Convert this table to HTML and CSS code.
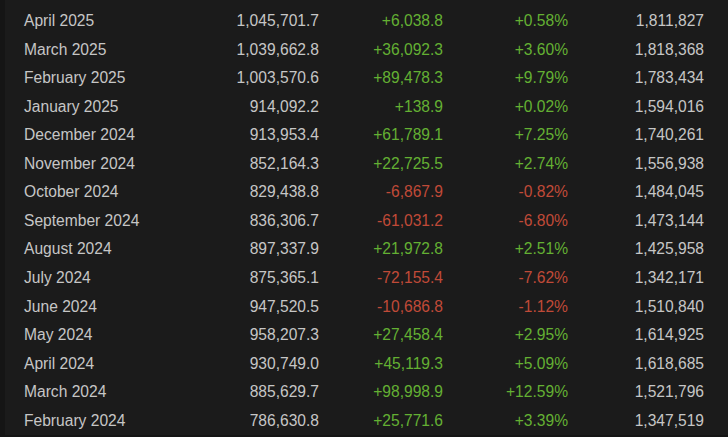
FILE: index.html
```html
<!DOCTYPE html>
<html lang="en">
<head>
<meta charset="utf-8">
<title>Monthly players</title>
<link rel="stylesheet" href="styles.css">
</head>
<body>
<div class="table">
  <div class="row"><span class="month">May 2025</span><span class="num">1,001,482.6</span><span class="num up">-44,219.1</span><span class="num up">-4.23%</span><span class="num">1,623,059</span></div>
  <div class="row"><span class="month">April 2025</span><span class="num">1,045,701.7</span><span class="num up">+6,038.8</span><span class="num up">+0.58%</span><span class="num">1,811,827</span></div>
  <div class="row"><span class="month">March 2025</span><span class="num">1,039,662.8</span><span class="num up">+36,092.3</span><span class="num up">+3.60%</span><span class="num">1,818,368</span></div>
  <div class="row"><span class="month">February 2025</span><span class="num">1,003,570.6</span><span class="num up">+89,478.3</span><span class="num up">+9.79%</span><span class="num">1,783,434</span></div>
  <div class="row"><span class="month">January 2025</span><span class="num">914,092.2</span><span class="num up">+138.9</span><span class="num up">+0.02%</span><span class="num">1,594,016</span></div>
  <div class="row"><span class="month">December 2024</span><span class="num">913,953.4</span><span class="num up">+61,789.1</span><span class="num up">+7.25%</span><span class="num">1,740,261</span></div>
  <div class="row"><span class="month">November 2024</span><span class="num">852,164.3</span><span class="num up">+22,725.5</span><span class="num up">+2.74%</span><span class="num">1,556,938</span></div>
  <div class="row"><span class="month">October 2024</span><span class="num">829,438.8</span><span class="num down">-6,867.9</span><span class="num down">-0.82%</span><span class="num">1,484,045</span></div>
  <div class="row"><span class="month">September 2024</span><span class="num">836,306.7</span><span class="num down">-61,031.2</span><span class="num down">-6.80%</span><span class="num">1,473,144</span></div>
  <div class="row"><span class="month">August 2024</span><span class="num">897,337.9</span><span class="num up">+21,972.8</span><span class="num up">+2.51%</span><span class="num">1,425,958</span></div>
  <div class="row"><span class="month">July 2024</span><span class="num">875,365.1</span><span class="num down">-72,155.4</span><span class="num down">-7.62%</span><span class="num">1,342,171</span></div>
  <div class="row"><span class="month">June 2024</span><span class="num">947,520.5</span><span class="num down">-10,686.8</span><span class="num down">-1.12%</span><span class="num">1,510,840</span></div>
  <div class="row"><span class="month">May 2024</span><span class="num">958,207.3</span><span class="num up">+27,458.4</span><span class="num up">+2.95%</span><span class="num">1,614,925</span></div>
  <div class="row"><span class="month">April 2024</span><span class="num">930,749.0</span><span class="num up">+45,119.3</span><span class="num up">+5.09%</span><span class="num">1,618,685</span></div>
  <div class="row"><span class="month">March 2024</span><span class="num">885,629.7</span><span class="num up">+98,998.9</span><span class="num up">+12.59%</span><span class="num">1,521,796</span></div>
  <div class="row"><span class="month">February 2024</span><span class="num">786,630.8</span><span class="num up">+25,771.6</span><span class="num up">+3.39%</span><span class="num">1,347,519</span></div>
</div>
</body>
</html>
```

FILE: styles.css
```css
html, body {
  margin: 0;
  padding: 0;
  background: #151515;
  overflow: hidden;
}

body {
  font-family: "Liberation Sans", Arial, sans-serif;
  font-size: 15.6px;
  color: #c6c6c6;
}

.table {
  margin-left: 5px;
  margin-top: -21.9px;
  background: #1b1b1b;
}

.row {
  display: grid;
  grid-template-columns: 176px 119px 124px 125px 136px;
  padding-left: 19px;
  height: 28.57px;
  align-items: center;
  white-space: nowrap;
}

.month {
  text-align: left;
}

.num {
  text-align: right;
}

.up {
  color: #64b033;
}

.down {
  color: #c04a38;
}
```
